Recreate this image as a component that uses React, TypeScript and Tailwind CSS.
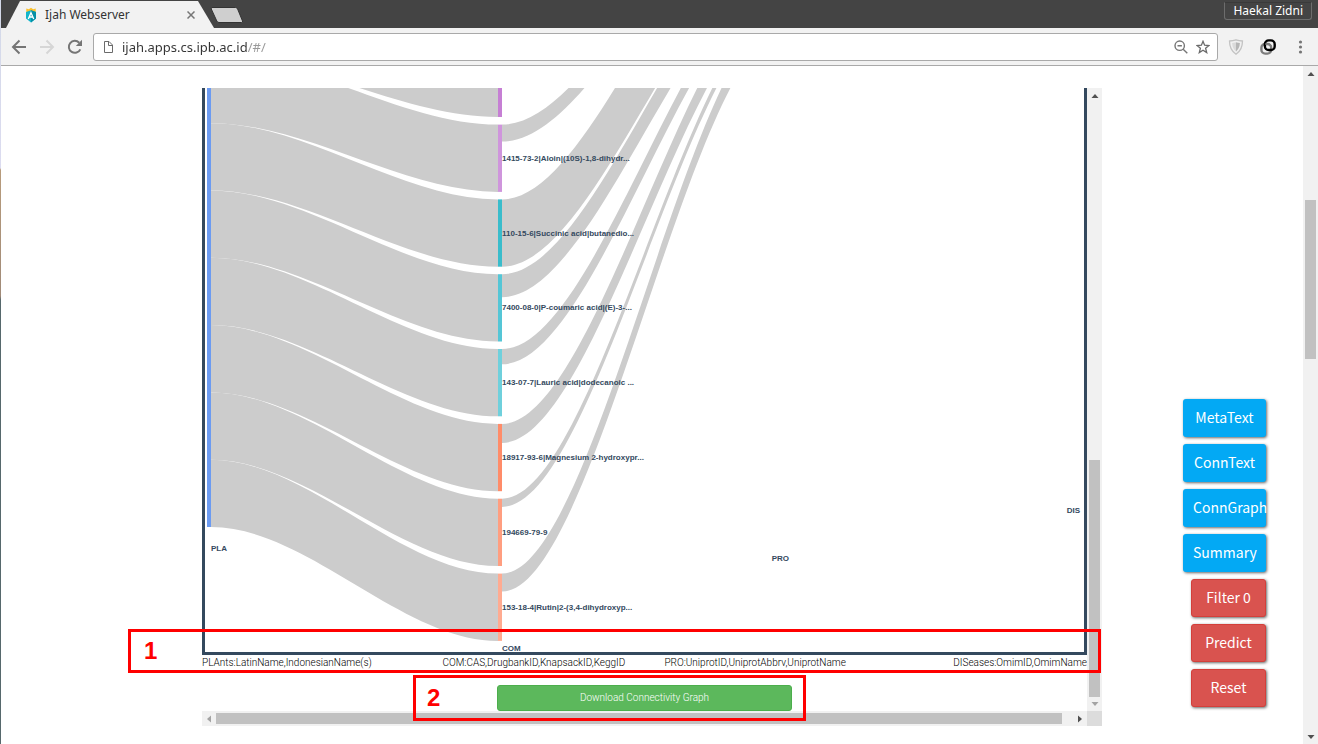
import React from "react";

type CompoundNode = {
  label: string;
  top: number;
  bottom: number;
  color: string;
  flow?: { from: [number, number]; to: [number, number] };
};

const PLANT_X = 211;
const COMPOUND_X = 498;
const COMPOUND_END = 502;
const PROTEIN_X = 789;
const PLANT_BOTTOM = 527;
const LINK_HEIGHT = 67.3;

const compounds: CompoundNode[] = [
  { label: "", top: 50, bottom: 117, color: "#c67fd4" },
  {
    label: "1415-73-2|Aloin|(10S)-1,8-dihydr...",
    top: 124.6,
    bottom: 191.9,
    color: "#cf95dc",
    flow: { from: [124.6, 141.6], to: [-144, -126] },
  },
  {
    label: "110-15-6|Succinic acid|butanedio...",
    top: 199.4,
    bottom: 266.7,
    color: "#39bccb",
    flow: { from: [199.4, 266.7], to: [-125.5, -58] },
  },
  {
    label: "7400-08-0|P-coumaric acid|(E)-3-...",
    top: 274.2,
    bottom: 341.5,
    color: "#55c6d6",
    flow: { from: [274.2, 297.2], to: [-58, -35] },
  },
  {
    label: "143-07-7|Lauric acid|dodecanoic ...",
    top: 349,
    bottom: 416.3,
    color: "#6fd0dc",
    flow: { from: [349, 364.3], to: [-34.3, -19] },
  },
  {
    label: "18917-93-6|Magnesium 2-hydroxypr...",
    top: 423.9,
    bottom: 491.2,
    color: "#ff8c69",
    flow: { from: [423.9, 442.9], to: [-18.8, 0.2] },
  },
  {
    label: "194669-79-9",
    top: 498.7,
    bottom: 566,
    color: "#ff9e80",
    flow: { from: [498.7, 506.9], to: [0.3, 8.6] },
  },
  {
    label: "153-18-4|Rutin|2-(3,4-dihydroxyp...",
    top: 573.6,
    bottom: 640.9,
    color: "#ffab91",
    flow: { from: [573.6, 591.6], to: [9, 27] },
  },
];

function ribbon(
  x0: number,
  x1: number,
  from: [number, number],
  to: [number, number],
) {
  const a = x0 + (x1 - x0) / 3;
  const b = x1 - (x1 - x0) / 3;
  return [
    `M${x0},${from[0]}`,
    `C${a},${from[0]} ${b},${to[0]} ${x1},${to[0]}`,
    `L${x1},${to[1]}`,
    `C${b},${to[1]} ${a},${from[1]} ${x0},${from[1]}`,
    "Z",
  ].join(" ");
}

function SankeyChart() {
  return (
    <svg
      viewBox="205 88 879 564"
      className="block w-full overflow-hidden"
      role="img"
      aria-label="Connectivity graph"
    >
      <g fill="#cccccc">
        {compounds.map((node, i) => {
          const bottom = PLANT_BOTTOM - (compounds.length - 1 - i) * LINK_HEIGHT;
          return (
            <path
              key={i}
              d={ribbon(
                PLANT_X,
                COMPOUND_X,
                [bottom - LINK_HEIGHT, bottom],
                [node.top, node.bottom],
              )}
            />
          );
        })}
        {compounds.map(
          (node, i) =>
            node.flow && (
              <path
                key={i}
                d={ribbon(COMPOUND_END, PROTEIN_X, node.flow.from, node.flow.to)}
              />
            ),
        )}
      </g>
      <rect x="207" y="60" width="4" height="467" fill="#6b9bf2" />
      {compounds.map((node, i) => (
        <rect
          key={i}
          x={COMPOUND_X}
          y={node.top}
          width="4"
          height={node.bottom - node.top}
          fill={node.color}
        />
      ))}
      <g className="fill-[#34495e] font-['Liberation_Sans',sans-serif] text-[8px] font-bold">
        {compounds.map((node, i) => (
          <text key={i} x="502" y={Math.floor((node.top + node.bottom) / 2) + 3}>
            {node.label}
          </text>
        ))}
        <text x="211" y="551">PLA</text>
        <text x="502" y="651">COM</text>
        <text x="789" y="561" textAnchor="end">PRO</text>
        <text x="1080" y="513" textAnchor="end">DIS</text>
      </g>
    </svg>
  );
}

function Arrow({ dir, muted }: { dir: "up" | "down" | "left" | "right"; muted?: boolean }) {
  const points = {
    up: "3.5,10 10.5,10 7,6",
    down: "3.5,5 10.5,5 7,9",
    left: "9,3.5 9,10.5 5,7",
    right: "5,3.5 5,10.5 9,7",
  }[dir];
  return (
    <svg viewBox="0 0 14 14" className="size-3.5 shrink-0" aria-hidden="true">
      <polygon points={points} fill={muted ? "#a3a3a3" : "#505050"} />
    </svg>
  );
}

function TabStrip() {
  return (
    <div className="flex h-7 items-start justify-between bg-[#444444] pl-[5px]">
      <div className="flex">
        <div className="mt-px flex h-[27px] w-52 items-center bg-[#f2f2f2] pr-[17px] pl-[18px] [clip-path:polygon(14px_0,192px_0,100%_100%,0_100%)]">
          <svg viewBox="0 0 14 16" className="h-4 w-3.5" aria-hidden="true">
            <path d="M2.300 1.500 4.800 2.300 7 .8 9.200 2.300 11.700 1.500 11.700 6 2.300 6Z" fill="#fbc02d" />
            <path d="M2 5 7 3.300 12 5 12 11.500 7 15.500 2 11.500Z" fill="#12b5cb" />
            <path d="M7 3.300 12 5 12 11.500 7 15.500Z" fill="#0590a6" />
            <path d="M4.300 12 7 5.700 9.700 12M5.400 10H8.600" fill="none" stroke="#fff" strokeWidth="1.3" />
          </svg>
          <span className="ml-[7px] flex-1 font-['Noto_Sans','Open_Sans',sans-serif] text-xs leading-5 text-[#333]">
            Ijah Webserver
          </span>
          <button aria-label="Close tab" className="flex size-3 items-center justify-center">
            <svg viewBox="0 0 8 8" className="size-2" aria-hidden="true">
              <path d="M.5.5 7.5 7.5M7.5.5.5 7.5" stroke="#777" strokeWidth="1.5" />
            </svg>
          </button>
        </div>
        <button aria-label="New tab" className="-ml-1 mt-[7px] h-4">
          <svg viewBox="0 0 34 16" className="h-4 w-[34px]" aria-hidden="true">
            <path
              d="M2 .5H25.500Q27 .5 27.600 2L32.500 14Q33 15.500 31.500 15.500H9Q7.500 15.500 6.800 14L1.300 2Q.8 .5 2 .5Z"
              fill="#cfcfcf"
              stroke="#333"
            />
          </svg>
        </button>
      </div>
      <button className="mt-0.5 mr-1.5 h-[18px] rounded-b-[3px] border border-[#6d6d6d] border-t-[#3a3a3a] px-2 font-['Noto_Sans','Open_Sans',sans-serif] text-xs leading-4 text-white">
        Haekal Zidni
      </button>
    </div>
  );
}

function Toolbar() {
  return (
    <div className="flex h-[38px] items-center border-b border-[#a9a9a9] bg-[#f2f2f2] pr-[11px] pl-2.5">
      <button aria-label="Back" className="size-4">
        <svg viewBox="0 0 16 16" className="size-4" fill="none" stroke="#757575" strokeWidth="2" aria-hidden="true">
          <path d="M15 8H2.500M8.500 1.500 2 8 8.500 14.500" />
        </svg>
      </button>
      <button aria-label="Forward" className="ml-3 size-4">
        <svg viewBox="0 0 16 16" className="size-4" fill="none" stroke="#d6d6d6" strokeWidth="2" aria-hidden="true">
          <path d="M1 8H13.500M7.500 1.500 14 8 7.500 14.500" />
        </svg>
      </button>
      <button aria-label="Reload" className="ml-3 size-4">
        <svg viewBox="0 0 16 16" className="size-4" aria-hidden="true">
          <path d="M13.300 10.300A6 6 0 1 1 12.200 3.700" fill="none" stroke="#757575" strokeWidth="2" />
          <path d="M15 .8V7H8.800Z" fill="#757575" />
        </svg>
      </button>
      <div className="ml-2.5 flex h-7 flex-1 items-center rounded-[3px] border border-[#a9a9a9] bg-white px-[7px]">
        <svg viewBox="0 0 12 12" className="mr-1 h-3 w-3.5" fill="none" stroke="#6b6b6b" aria-hidden="true">
          <path d="M2.500 .5H7L10.500 4V11.500H2.500ZM6.500 .5V4.500H10.500" />
        </svg>
        <input
          aria-label="Address"
          defaultValue="ijah.apps.cs.ipb.ac.id/#/"
          className="ml-[3px] min-w-0 flex-1 bg-[linear-gradient(90deg,#333_126px,#999_126px)] bg-clip-text font-['Noto_Sans','Open_Sans',sans-serif] text-[13px] leading-5 text-transparent outline-none"
        />
        <button aria-label="Zoom" className="size-3.5">
          <svg viewBox="0 0 14 14" className="size-3.5" fill="none" stroke="#757575" strokeWidth="1.4" aria-hidden="true">
            <circle cx="5.700" cy="5.700" r="4.700" />
            <path d="M9.200 9.200 13.300 13.300M3.500 5.700H7.900" />
          </svg>
        </button>
        <button aria-label="Bookmark" className="ml-2 size-3.5">
          <svg viewBox="0 0 14 14" className="size-3.5" fill="none" stroke="#6b6b6b" strokeWidth="1.3" aria-hidden="true">
            <path d="M7 1.300 8.600 5.200 12.900 5.500 9.600 8.200 10.700 12.600 7 10.200 3.300 12.600 4.400 8.200 1.100 5.500 5.400 5.200Z" />
          </svg>
        </button>
      </div>
      <button aria-label="Shield extension" className="ml-2.5 h-4 w-4">
        <svg viewBox="0 0 15 16" className="h-4 w-4" aria-hidden="true">
          <path d="M1 2Q4.500 1.800 7.500 .8 10.500 1.800 14 2 14 11 7.500 15.200 1 11 1 2Z" fill="#f0f0f0" stroke="#c3c3c3" strokeWidth="1.300" />
          <path d="M7.500 3.200Q5.500 3.900 3.600 4 3.900 9.500 7.500 12.500Z" fill="#dadada" />
          <path d="M7.500 3.200Q9.500 3.900 11.400 4 11.100 9.500 7.500 12.500Z" fill="#b5b5b5" />
        </svg>
      </button>
      <button aria-label="Link extension" className="ml-4 size-4">
        <svg viewBox="0 0 16 16" className="size-4" fill="none" strokeWidth="2.400" aria-hidden="true">
          <rect x="1.400" y="5" width="9.800" height="9.600" rx="3.800" stroke="#7d7d7d" />
          <rect x="4.900" y="1.400" width="9.800" height="9.600" rx="3.800" stroke="#000" />
          <path d="M5.200 5H7.400Q11.200 5 11.200 8.600" stroke="#7d7d7d" strokeWidth="1.600" />
        </svg>
      </button>
      <button aria-label="Menu" className="ml-4 h-4 w-[15px]">
        <svg viewBox="0 0 15 16" className="h-4 w-[15px]" fill="#757575" aria-hidden="true">
          <circle cx="8.500" cy="3" r="1.600" />
          <circle cx="8.500" cy="8" r="1.600" />
          <circle cx="8.500" cy="13" r="1.600" />
        </svg>
      </button>
    </div>
  );
}

function GraphPanel() {
  return (
    <section className="relative mt-[22px] grid grid-cols-[1fr_15px] self-start">
      <div className="flex flex-col">
        <div className="border-x-3 border-b-3 border-[#34495e]">
          <SankeyChart />
        </div>
        <div className="grid h-[30px] grid-cols-4 font-['Roboto',sans-serif] text-[10px] leading-4 font-light whitespace-nowrap text-black">
          <span>PLAnts:LatinName,IndonesianName(s)</span>
          <span className="text-center">COM:CAS,DrugbankID,KnapsackID,KeggID</span>
          <span className="text-center">PRO:UniprotID,UniprotAbbrv,UniprotName</span>
          <span className="text-right">DISeases:OmimID,OmimName</span>
        </div>
        <button className="h-[26px] w-1/3 self-center rounded-[3px] border border-[#4cae4c] bg-[#5cb85c] font-['Roboto',sans-serif] text-[10px] leading-4 font-light text-white">
          Download Connectivity Graph
        </button>
      </div>
      <div className="flex flex-col items-center bg-[#f1f1f1]">
        <Arrow dir="up" />
        <div className="mt-auto h-[237px] w-[11px] bg-[#c1c1c1]" />
        <Arrow dir="down" muted />
      </div>
      <div className="flex h-[15px] items-center bg-[#f1f1f1]">
        <Arrow dir="left" muted />
        <div className="mr-[11px] h-[11px] flex-1 bg-[#c1c1c1]" />
        <Arrow dir="right" />
      </div>
      <div className="bg-[#dcdcdc]" />
      <div className="pointer-events-none absolute right-px bottom-[53px] -left-[74px] flex h-11 items-center border-3 border-[#ff0000] pl-[13px] font-['Liberation_Sans',sans-serif] text-2xl leading-6 font-bold text-[#ff0000]">
        1
      </div>
      <div className="pointer-events-none absolute bottom-[5px] left-[211px] flex h-[46px] w-[393px] items-center border-3 border-[#ff0000] pl-[11px] font-['Liberation_Sans',sans-serif] text-2xl leading-6 font-bold text-[#ff0000]">
        2
      </div>
    </section>
  );
}

const views = ["MetaText", "ConnText", "ConnGraph", "Summary"];
const actions = ["Filter 0", "Predict", "Reset"];

function SideActions() {
  return (
    <nav
      aria-label="Actions"
      className="flex flex-col items-end justify-end gap-[7px] pr-[37px] pb-[37px] font-['Noto_Sans_CJK_SC',sans-serif] text-sm leading-5 text-white"
    >
      {views.map((label) => (
        <button
          key={label}
          className="h-[38px] w-[83px] rounded-[3px] bg-[#03a9f4] px-2.5 pb-0.5 whitespace-nowrap shadow-[1px_1px_3px_rgba(0,0,0,0.6)]"
        >
          {label}
        </button>
      ))}
      {actions.map((label) => (
        <button
          key={label}
          className="h-[38px] w-[75px] rounded-[3px] border border-[#d43f3a] bg-[#d9534f] pb-0.5 whitespace-nowrap shadow-[1px_1px_3px_rgba(0,0,0,0.6)]"
        >
          {label}
        </button>
      ))}
    </nav>
  );
}

export default function App() {
  return (
    <div className="flex min-h-screen bg-white">
      <div className="w-px shrink-0 bg-[linear-gradient(#d3d9e8,#dcdcf0_168px,#b89c7c_170px,#a08a78_296px,#56686c_300px,#56686c)]" />
      <div className="flex min-w-0 flex-1 flex-col">
        <header>
          <TabStrip />
          <Toolbar />
        </header>
        <div className="flex flex-1">
          <main className="grid flex-1 grid-cols-[1fr_minmax(0,900px)_1fr]">
            <div />
            <GraphPanel />
            <SideActions />
          </main>
          <div className="flex w-[15px] flex-col items-center bg-[#f1f1f1]">
            <Arrow dir="up" />
            <div className="mt-[120px] h-[159px] w-[11px] bg-[#c1c1c1]" />
            <div className="flex-1" />
            <Arrow dir="down" />
          </div>
        </div>
      </div>
    </div>
  );
}
